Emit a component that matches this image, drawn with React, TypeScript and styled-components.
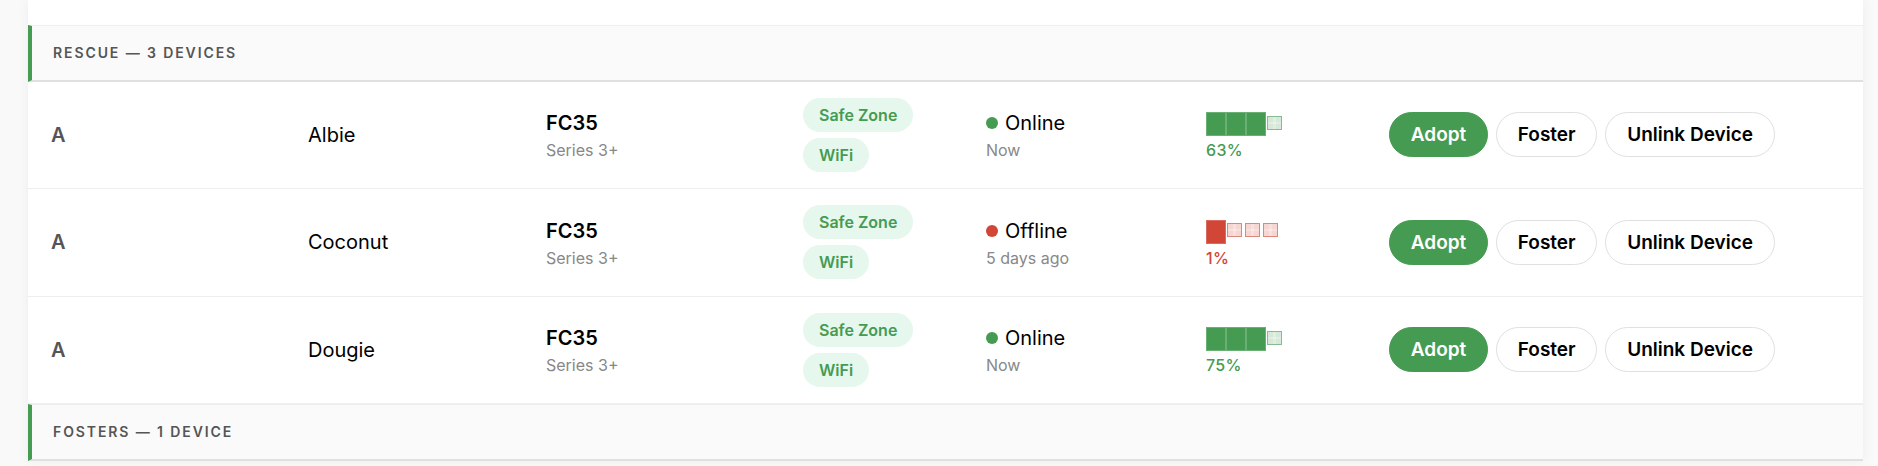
import React from 'react';
import styled, { createGlobalStyle } from 'styled-components';

const green = '#459b52';
const red = '#d14636';

const GlobalStyle = createGlobalStyle`
  html, body {
    margin: 0;
    height: 466px;
    overflow: hidden;
    background: #f9f9f9;
    font-family: Inter, "Noto Sans", sans-serif;
    color: #000;
  }
`;

const Page = styled.div`
  padding: 0 15px 0 28px;
`;

const Card = styled.div`
  background: #fff;
  padding-top: 25px;
  box-shadow: 0 0 12px rgba(0, 0, 0, 0.05);
`;

const GroupHeader = styled.div`
  display: flex;
  align-items: center;
  height: 56.5px;
  box-sizing: border-box;
  padding-left: 21px;
  background: #fafafa;
  border-top: 1px solid #eeeeee;
  border-bottom: 2px solid #e0e0e0;
  border-left: 4px solid ${green};
  font-size: 14px;
  font-weight: 600;
  letter-spacing: 1.9px;
  color: #555;
`;

const Row = styled.div`
  display: grid;
  grid-template-columns: 256px 238px 257px 183px 220px 183px 1fr;
  align-items: center;
  height: 107.5px;
  box-sizing: border-box;
  padding-left: 24px;
  border-bottom: 1px solid #eeeeee;
`;

const Grade = styled.div`
  margin-left: -1px;
  font-size: 20px;
  font-weight: 600;
  color: #555;
`;

const Name = styled.div`
  font-size: 20px;
`;

const Stack = styled.div`
  display: flex;
  flex-direction: column;
  align-items: flex-start;
  gap: 6px;
`;

const TwoLine = styled.div`
  padding-top: 3px;
`;

const Model = styled.div`
  font-size: 20px;
  font-weight: 600;
  line-height: 26px;
`;

const Muted = styled.div`
  margin-top: 2px;
  font-size: 16px;
  line-height: 24px;
  color: #888;
`;

const Tag = styled.span`
  padding: 0 16px;
  height: 34px;
  display: flex;
  align-items: center;
  border-radius: 17px;
  background: #e6f7ed;
  color: ${green};
  font-size: 16px;
  font-weight: 600;
`;

const StatusLine = styled.div`
  display: flex;
  align-items: center;
  gap: 8px;
  font-size: 20px;
  line-height: 26px;
`;

const Dot = styled.span<{ $color: string }>`
  width: 12px;
  height: 12px;
  margin-left: -0.5px;
  margin-right: -0.5px;
  border-radius: 50%;
  background: ${({ $color }) => $color};
`;

const Bars = styled.div`
  display: flex;
  align-items: center;
  height: 24px;
`;

const Segment = styled.span<{ $color: string; $filled: boolean }>`
  box-sizing: border-box;
  ${({ $color, $filled }) =>
    $filled
      ? `
        width: 20px;
        height: 24px;
        background: ${$color};
        border: 1px solid #ffffff33;
      `
      : `
        width: 15px;
        height: 14px;
        margin: 0 2px 3px 1px;
        border: 1px solid ${$color};
        background-color: ${$color}55;
        background-image:
          linear-gradient(90deg, transparent 40%, #ffffff44 40%, #ffffff44 60%, transparent 60%),
          linear-gradient(0deg, transparent 40%, #ffffff44 40%, #ffffff44 60%, transparent 60%);
        opacity: 0.65;
      `}
`;

const Percent = styled.div<{ $color: string }>`
  margin-top: 4px;
  font-size: 16px;
  font-weight: 500;
  letter-spacing: 0.3px;
  color: ${({ $color }) => $color};
`;

const Actions = styled.div`
  display: flex;
  gap: 8px;
`;

const Button = styled.button<{ $primary?: boolean }>`
  height: 45px;
  padding: 0 20.75px;
  border-radius: 23px;
  font-family: inherit;
  font-size: 19px;
  font-weight: 600;
  border: 1px solid ${({ $primary }) => ($primary ? green : '#e0e0e0')};
  background: ${({ $primary }) => ($primary ? green : '#fff')};
  color: ${({ $primary }) => ($primary ? '#fff' : '#000')};
`;

const devices = [
  { name: 'Albie', online: true, seen: 'Now', filled: 3, pct: '63%' },
  { name: 'Coconut', online: false, seen: '5 days ago', filled: 1, pct: '1%' },
  { name: 'Dougie', online: true, seen: 'Now', filled: 3, pct: '75%' },
];

export default function App() {
  return (
    <Page>
      <GlobalStyle />
      <Card>
        <GroupHeader>RESCUE — 3 DEVICES</GroupHeader>
        {devices.map((d) => {
          const color = d.online ? green : red;
          return (
            <Row key={d.name}>
              <Grade>A</Grade>
              <Name>{d.name}</Name>
              <TwoLine>
                <Model>FC35</Model>
                <Muted>Series 3+</Muted>
              </TwoLine>
              <Stack>
                <Tag>Safe Zone</Tag>
                <Tag>WiFi</Tag>
              </Stack>
              <TwoLine>
                <StatusLine>
                  <Dot $color={color} />
                  {d.online ? 'Online' : 'Offline'}
                </StatusLine>
                <Muted>{d.seen}</Muted>
              </TwoLine>
              <TwoLine>
                <Bars>
                  {[0, 1, 2, 3].map((i) => (
                    <Segment key={i} $color={color} $filled={i < d.filled} />
                  ))}
                </Bars>
                <Percent $color={color}>{d.pct}</Percent>
              </TwoLine>
              <Actions>
                <Button $primary>Adopt</Button>
                <Button>Foster</Button>
                <Button>Unlink Device</Button>
              </Actions>
            </Row>
          );
        })}
        <GroupHeader>FOSTERS — 1 DEVICE</GroupHeader>
      </Card>
    </Page>
  );
}
